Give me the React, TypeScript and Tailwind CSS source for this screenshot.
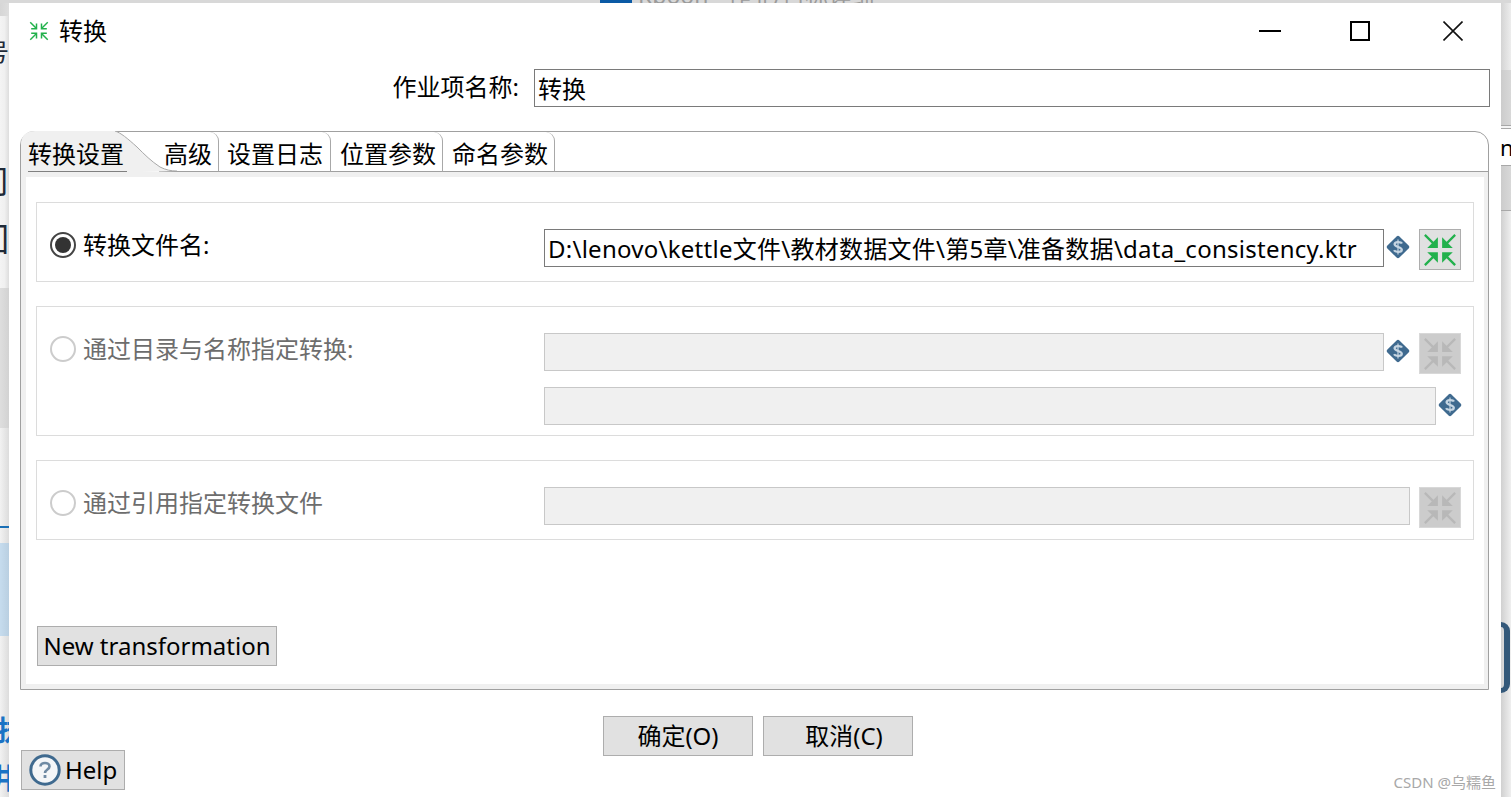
const GREEN = "#22b14c";

function ShrinkIcon({ size, color, thin }: { size: number; color: string; thin?: boolean }) {
  // four arrows pointing at the middle, drawn once and mirrored
  const arrow = thin ? (
    <g fill="none" stroke={color} strokeWidth="2.4">
      <path d="M2 2 L12 12" />
      <path d="M12 4 V12.5 H3.5" />
    </g>
  ) : (
    <g fill={color}>
      <path d="M14 14 H4 L14 4 Z" />
      <path d="M1 2.5 L2.5 1 L10.5 9 L9 10.5 Z" />
    </g>
  );
  return (
    <svg width={size} height={size} viewBox="0 0 32 32" className="shrink-0">
      <g>{arrow}</g>
      <g transform="matrix(-1 0 0 1 32 0)">{arrow}</g>
      <g transform="matrix(1 0 0 -1 0 32)">{arrow}</g>
      <g transform="matrix(-1 0 0 -1 32 32)">{arrow}</g>
    </svg>
  );
}

function DollarIcon() {
  return (
    <svg width="24" height="24" viewBox="0 0 24 24" className="ml-[2px] mt-[6px] shrink-0">
      <rect x="3.5" y="3.5" width="17" height="17" rx="2" transform="rotate(45 12 12)" fill="#3f6a8f" />
      <path d="M16 8.6 C15 6.6 8.6 6.4 8.6 9.3 C8.6 12.2 15.8 11.8 15.8 14.7 C15.8 17.6 9.2 17.4 8 15.3" fill="none" stroke="#c6d5e2" strokeWidth="2.3" />
      <path d="M12 4.5 V19.5" stroke="#c6d5e2" strokeWidth="1.2" />
    </svg>
  );
}

function HelpIcon() {
  return (
    <svg width="32" height="32" viewBox="0 0 32 32" className="shrink-0">
      <circle cx="16" cy="16" r="14.2" fill="#f4f6f8" stroke="#3f6a8f" strokeWidth="3" />
      <path d="M11.5 12.5 C11.5 7.8 20.5 7.8 20.5 12.5 C20.5 15.5 16 15.5 16 19" fill="none" stroke="#6f8aa3" strokeWidth="2.6" />
      <rect x="14.6" y="21" width="2.8" height="3" fill="#6f8aa3" />
    </svg>
  );
}

function BrowseButton({ disabled }: { disabled?: boolean }) {
  return (
    <button
      className={
        disabled
          ? "ml-[9px] flex h-[41px] w-[42px] shrink-0 items-center justify-center border border-[#d8d8d8] bg-[#cccccc]"
          : "ml-[9px] flex h-[41px] w-[42px] shrink-0 items-center justify-center border border-[#adadad] bg-[#e1e1e1]"
      }
    >
      <ShrinkIcon size={34} color={disabled ? "#b8b8b8" : GREEN} />
    </button>
  );
}

function TextField({ width, value, disabled }: { width: string; value?: string; disabled?: boolean }) {
  return (
    <div
      className={
        disabled
          ? `h-[38px] shrink-0 border border-[#c8c8c8] bg-[#f0f0f0] ${width}`
          : `h-[38px] shrink-0 whitespace-nowrap border border-[#7a7a7a] bg-white pl-[3px] text-[24px] leading-[37px] text-black ${width}`
      }
    >
      {value}
    </div>
  );
}

function RadioLabel({ label, checked }: { label: string; checked?: boolean }) {
  return (
    <div className="flex h-[32px] w-[507px] shrink-0 items-center pl-[13px]">
      <div
        className={
          checked
            ? "flex h-[26px] w-[26px] items-center justify-center rounded-full border-[2px] border-[#444444]"
            : "flex h-[26px] w-[26px] items-center justify-center rounded-full border-[2px] border-[#cccccc]"
        }
      >
        {checked && <div className="h-[16px] w-[16px] rounded-full bg-[#333333]" />}
      </div>
      <span className={checked ? "ml-[7px] text-[24px] text-black" : "ml-[7px] text-[24px] text-[#6d6d6d]"}>{label}</span>
    </div>
  );
}

function Tab({ label, className }: { label: string; className: string }) {
  return (
    <div className={`h-[40px] shrink-0 rounded-tr-[9px] border-r border-b border-r-[#a8a8a8] border-b-[#a0a0a0] pt-[1px] text-[24px] leading-[42px] whitespace-nowrap text-black ${className}`}>
      {label}
    </div>
  );
}

function LeftStrip() {
  return (
    <div className="relative flex h-[794px] w-[9px] shrink-0 flex-col overflow-hidden">
      <div className="h-[13px] bg-gradient-to-r from-[#d6d6d6] to-[#dedede]" />
      <div className="relative h-[272px] bg-gradient-to-r from-[#f4f4f4] via-[#f0f0f0] to-[#dddddd]">
        <span className="absolute top-[20px] left-[-15px] text-[24px] leading-[32px] text-[#1f2a38]">号</span>
        <span className="absolute top-[145px] left-[-23px] text-[32px] leading-[40px] text-[#1f2a38]">司</span>
        <span className="absolute top-[203px] left-[-23px] text-[32px] leading-[40px] text-[#1f2a38]">回</span>
      </div>
      <div className="h-[140px] bg-gradient-to-r from-[#dedede] to-[#d2d2d2]" />
      <div className="h-[98px] bg-gradient-to-r from-[#f2f2f2] to-[#dcdcdc]" />
      <div className="h-[2px] bg-[#1a6fb5]" />
      <div className="h-[15px] bg-gradient-to-r from-[#f2f2f2] to-[#dcdcdc]" />
      <div className="h-[93px] bg-gradient-to-r from-[#c6dcee] to-[#b9cfe1]" />
      <div className="relative flex-1 bg-gradient-to-r from-[#f2f2f2] to-[#dcdcdc]">
        <span className="absolute top-[76px] left-[-3px] text-[28px] leading-[36px] font-bold text-[#1a73c5]">执</span>
        <span className="absolute top-[124px] left-[-10px] text-[28px] leading-[36px] font-bold text-[#1a73c5]">井</span>
      </div>
    </div>
  );
}

function RightStrip() {
  return (
    <div className="flex h-[794px] w-[10px] shrink-0 flex-col overflow-hidden">
      <div className="h-[67px] bg-gradient-to-r from-[#d4d4d4] to-[#ededed]" />
      <div className="h-[55px] bg-gradient-to-r from-[#cccccc] to-[#d8d8d8]" />
      <div className="h-[4px] border-y border-[#a8a8a8] bg-[#f4f4f4]" />
      <div className="h-[36px] overflow-hidden bg-white text-[22px] leading-[36px] text-black">
        <span className="ml-[-1px] block">n</span>
      </div>
      <div className="h-[1px] bg-[#a8a8a8]" />
      <div className="h-[44px] bg-gradient-to-r from-[#cccccc] to-[#d8d8d8]" />
      <div className="h-[1px] bg-[#a8a8a8]" />
      <div className="flex flex-1 flex-col bg-gradient-to-r from-[#d0d0d0] to-[#efefef]">
        <div className="mt-[411px] h-[71px] w-[9px] rounded-r-[9px] border-y-[5px] border-r-[6px] border-[#34597a]" />
      </div>
    </div>
  );
}

export default function App() {
  return (
    <div className="flex h-[797px] w-[1511px] flex-col overflow-hidden bg-[#eeeeee] font-['Noto_Sans','Noto_Sans_CJK_SC',sans-serif]">
      <div className="flex h-[3px] shrink-0 items-start overflow-hidden bg-[#d8d8d8]">
        <div className="ml-[600px] h-[3px] w-[32px] shrink-0 bg-[#0b5aa5]" />
        <span className="mt-[-21px] ml-[6px] text-[23px] leading-[32px] whitespace-nowrap text-[#9a9a9a]">Kboon - 作业/目标详细</span>
      </div>

      <div className="flex">
        <LeftStrip />

        <div className="relative h-[794px] w-[1492px] shrink-0 bg-white">
          {/* title bar */}
          <div className="flex h-[56px] items-center pl-[20px]">
            <ShrinkIcon size={20} color={GREEN} thin />
            <span className="ml-[10px] text-[24px] text-black">转换</span>
            <div className="ml-auto flex items-center pr-[38px]">
              <div className="h-[2px] w-[22px] bg-black" />
              <div className="ml-[69px] h-[20px] w-[20px] border-[2px] border-black" />
              <svg width="20" height="20" viewBox="0 0 20 20" className="ml-[73px]">
                <path d="M0.5 0.5 L19.5 19.5 M19.5 0.5 L0.5 19.5" stroke="#111111" strokeWidth="1.6" />
              </svg>
            </div>
          </div>

          {/* job entry name */}
          <div className="mt-[10px] flex items-center justify-end pr-[11px]">
            <span className="mb-[2px] text-[24px] text-black">作业项名称:</span>
            <TextField width="ml-[15px] w-[956px]" value="转换" />
          </div>

          {/* tab folder */}
          <div className="mt-[24px] ml-[11px] flex h-[559px] w-[1469px] flex-col rounded-t-[14px] border border-[#a0a0a0]">
            <div className="flex h-[40px] shrink-0">
              <div className="relative h-[40px] w-[138px] shrink-0 pt-[1px] pl-[7px] text-[24px] leading-[42px] text-black">
                <svg width="156" height="41" viewBox="0 0 156 41" className="absolute top-[-1px] left-0">
                  <path d="M0 41 V14 Q0 0 14 0 H94 C100 2 106 7 116 16 C124 24 130 30 139 36 C145 39 150 40 156 40 L120 41 Z" fill="#f0f0f0" />
                  <path d="M94 0 C100 2 106 7 116 16 C124 24 130 30 139 36 C145 39 150 40 156 40" fill="none" stroke="#a8a8a8" />
                </svg>
                <span className="relative">转换设置</span>
                <div className="absolute top-[39px] left-[7px] h-[1px] w-[99px] bg-[#808080]" />
              </div>
              <Tab label="高级" className="w-[60px] pl-[5px]" />
              <Tab label="设置日志" className="w-[112px] pl-[8px]" />
              <Tab label="位置参数" className="w-[112px] pl-[9px]" />
              <Tab label="命名参数" className="w-[112px] pl-[9px]" />
              <div className="h-[40px] flex-1 border-b border-[#a0a0a0]" />
            </div>

            <div className="flex-1 border-y-[5px] border-r-[4px] border-l-[5px] border-[#f0f0f0] bg-white px-[10px] pt-[25px]">
              <div className="flex h-[80px] border border-[#dcdcdc] pt-[26px]">
                <RadioLabel label="转换文件名:" checked />
                <TextField
                  width="w-[840px] tracking-[0.26px]"
                  value="D:\lenovo\kettle文件\教材数据文件\第5章\准备数据\data_consistency.ktr"
                />
                <DollarIcon />
                <BrowseButton />
              </div>

              <div className="mt-[24px] h-[130px] border border-[#dcdcdc] pt-[26px]">
                <div className="flex">
                  <RadioLabel label="通过目录与名称指定转换:" />
                  <TextField width="w-[840px]" disabled />
                  <DollarIcon />
                  <BrowseButton disabled />
                </div>
                <div className="mt-[13px] ml-[507px] flex">
                  <TextField width="w-[892px]" disabled />
                  <DollarIcon />
                </div>
              </div>

              <div className="mt-[24px] flex h-[80px] border border-[#dcdcdc] pt-[26px]">
                <RadioLabel label="通过引用指定转换文件" />
                <TextField width="w-[866px]" disabled />
                <BrowseButton disabled />
              </div>

              <button className="mt-[86px] ml-[1px] h-[40px] w-[240px] border border-[#adadad] bg-[#e1e1e1] text-[24px] leading-[38px] whitespace-nowrap text-black">
                New transformation
              </button>
            </div>
          </div>

          {/* footer buttons */}
          <div className="mt-[26px] ml-[594px] flex gap-[10px]">
            <button className="h-[40px] w-[150px] border border-[#adadad] bg-[#e1e1e1] text-[24px] leading-[38px] text-black">确定(O)</button>
            <button className="h-[40px] w-[150px] border border-[#adadad] bg-[#e1e1e1] pl-[12px] text-[24px] leading-[38px] text-black">取消(C)</button>
          </div>
          <button className="mt-[-6px] ml-[12px] flex h-[40px] w-[104px] items-center border border-[#adadad] bg-[#e1e1e1] pl-[7px] text-[24px] text-black">
            <HelpIcon />
            <span className="ml-[4px]">Help</span>
          </button>

          <span className="absolute right-[5px] bottom-[5px] text-[15px] leading-[20px] text-[#a8a8a8]">CSDN @乌糯鱼</span>
        </div>

        <RightStrip />
      </div>
    </div>
  );
}
